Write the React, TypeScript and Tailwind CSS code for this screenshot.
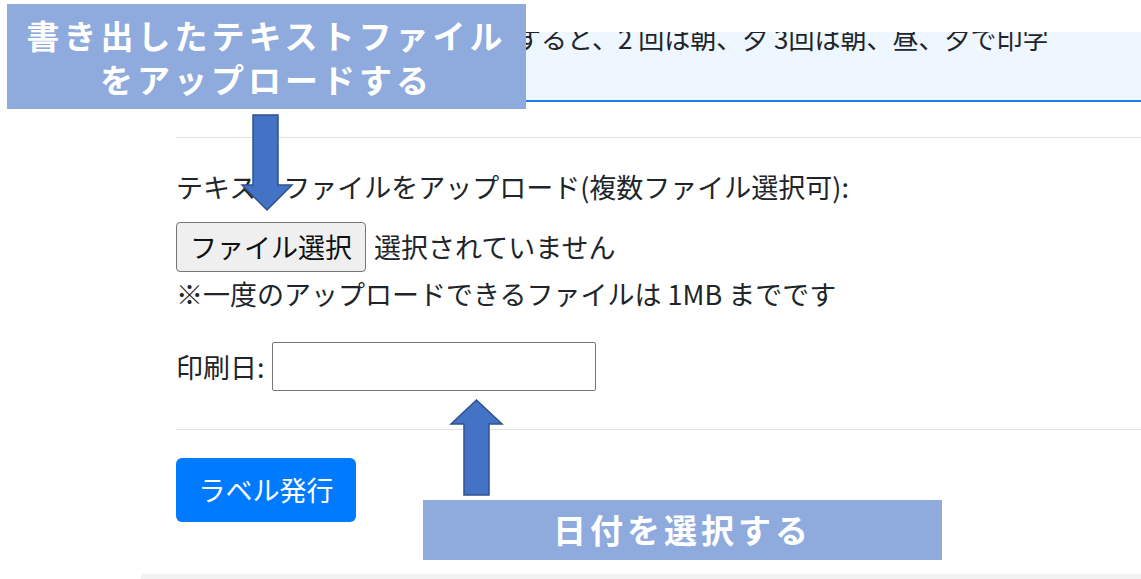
const FONT = '"Noto Sans CJK JP", "Noto Sans", sans-serif'

function DownArrow() {
  return (
    <svg
      className="absolute left-[240px] top-[113px]"
      width="54"
      height="100"
      viewBox="0 0 54 100"
    >
      <polygon
        points="13,2 38,2 38,72 52,72 27,97 2,72 13,72"
        fill="#4472c4"
        stroke="#2f528f"
        strokeWidth="1.5"
        strokeLinejoin="miter"
      />
    </svg>
  )
}

function UpArrow() {
  return (
    <svg
      className="absolute left-[449px] top-[398px]"
      width="55"
      height="100"
      viewBox="0 0 55 100"
    >
      <polygon
        points="27.5,2 53,26 40,26 40,97 15,97 15,26 2,26"
        fill="#4472c4"
        stroke="#2f528f"
        strokeWidth="1.5"
        strokeLinejoin="miter"
      />
    </svg>
  )
}

export default function App() {
  return (
    <div className="relative min-h-[579px] overflow-hidden bg-white text-[#212529]" style={{ fontFamily: FONT }}>
      <div className="h-[32px]" />
      <div className="ml-[141px]">
        <div className="pl-[35px]">
          {/* notice, top line cut off in the capture */}
          <div className="h-[70px] overflow-hidden border-b-2 border-[#1a7cf0] bg-[#eef6ff] pl-[27px]">
            <p className="-mt-[14px] whitespace-nowrap text-[26px] leading-[39px]">
              用法欄で一日の回数を指定すると、2 回は朝、夕 3回は朝、昼、夕で印字
            </p>
          </div>

          <hr className="mt-[35px] border-0 border-t border-[#e3e3e3]" />

          <div className="mt-[29px] whitespace-nowrap text-[27px] leading-[40px]">
            テキストファイルをアップロード(複数ファイル選択可):
          </div>

          <div className="mt-[15px] flex items-center gap-[8px] text-[27px]">
            <button
              type="button"
              className="h-[50px] rounded-[4px] border border-[#767676] bg-[#efefef] px-[13px] leading-[32px] text-[#101010]"
            >
              ファイル選択
            </button>
            <span className="leading-[40px]">選択されていません</span>
          </div>

          <div className="mt-[2px] whitespace-nowrap text-[27px] leading-[40px]">
            ※一度のアップロードできるファイルは 1MB までです
          </div>

          <div className="mt-[28px] flex items-center gap-[7px] text-[27px]">
            <label className="leading-[40px]">印刷日:</label>
            <input
              type="text"
              className="h-[49px] w-[324px] rounded-[2px] border border-[#767676] bg-white px-2 outline-none"
            />
          </div>

          <hr className="mt-[38px] border-0 border-t border-[#e3e3e3]" />

          <button
            type="button"
            className="mt-[28px] h-[64px] w-[180px] rounded-[6px] bg-[#007bff] text-[27px] leading-[40px] text-white"
          >
            ラベル発行
          </button>
        </div>
        <div className="mt-[52px] h-[5px] bg-[#f2f2f2]" />
      </div>

      {/* annotations */}
      <div className="absolute left-[7px] top-[4px] flex h-[105px] w-[519px] flex-col items-center justify-center bg-[#8faadc] text-[33px] font-bold leading-[44px] tracking-[4px] text-white">
        <span>書き出したテキストファイル</span>
        <span>をアップロードする</span>
      </div>
      <DownArrow />
      <UpArrow />
      <div className="absolute left-[423px] top-[500px] flex h-[60px] w-[519px] items-center justify-center bg-[#8faadc] text-[33px] font-bold tracking-[4px] text-white">
        日付を選択する
      </div>
    </div>
  )
}
